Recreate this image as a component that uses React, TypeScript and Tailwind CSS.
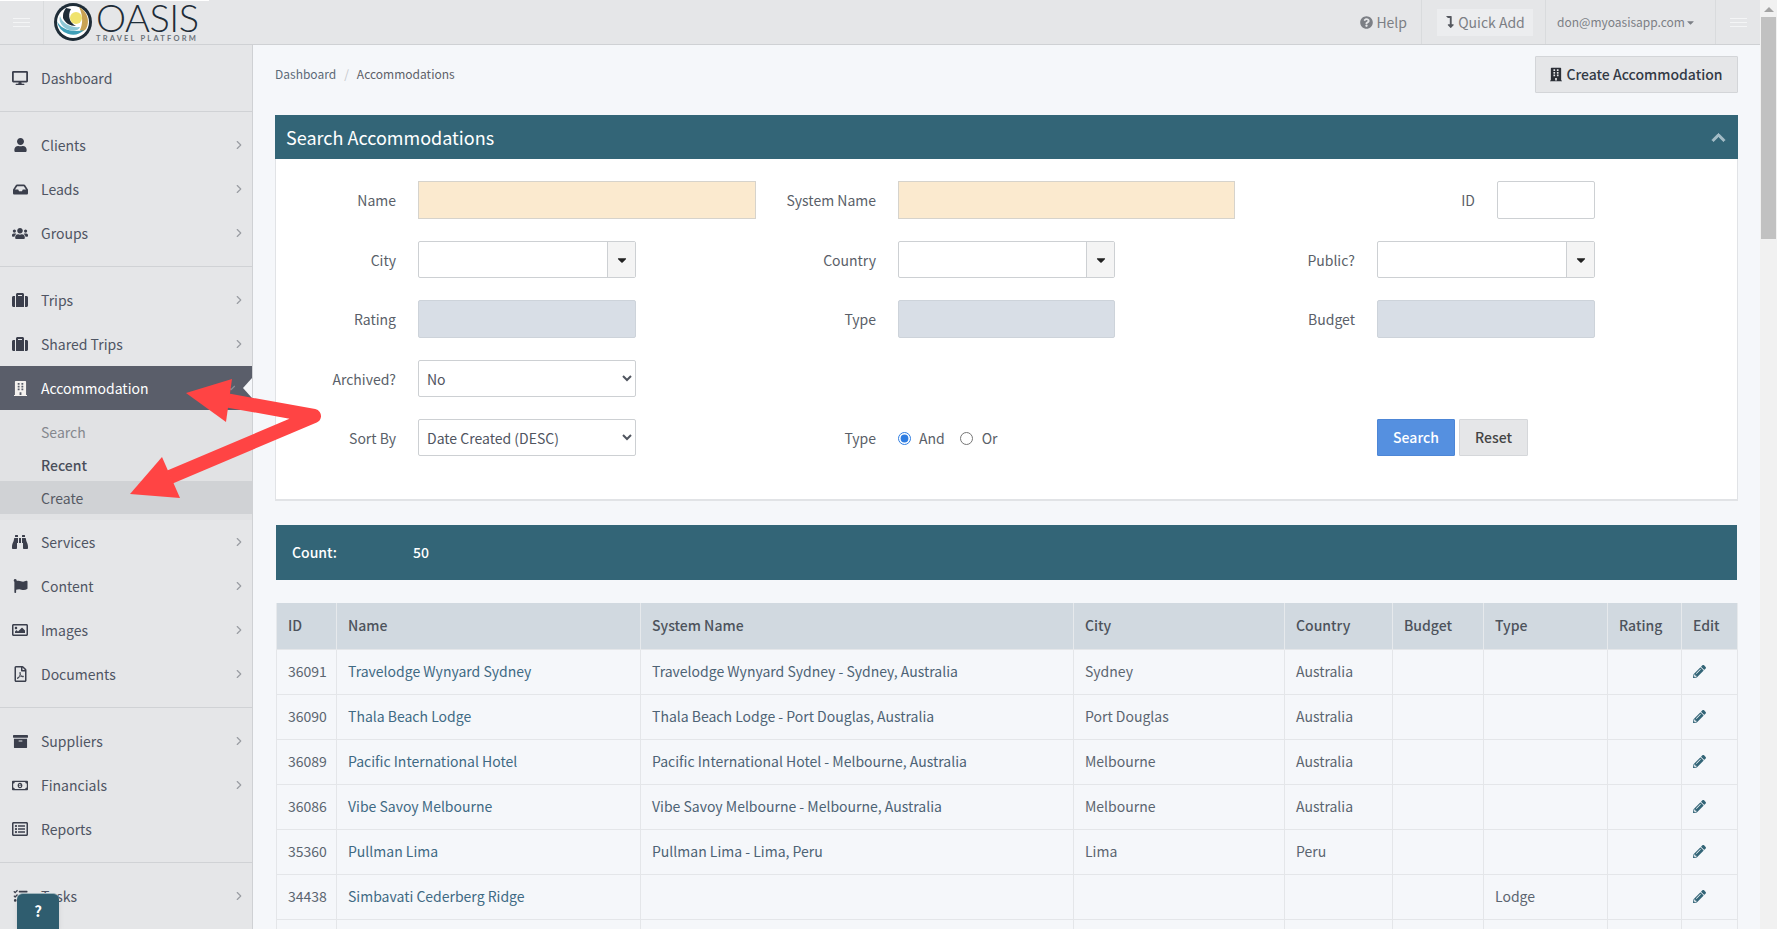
import React from "react";
import { ChevronRight, ChevronDown } from "lucide-react";
import {
  FaDesktop,
  FaUser,
  FaInbox,
  FaUsers,
  FaSuitcase,
  FaBuilding,
  FaBinoculars,
  FaFlag,
  FaRegImage,
  FaRegFilePdf,
  FaArchive,
  FaRegMoneyBillAlt,
  FaRegListAlt,
  FaTasks,
  FaQuestionCircle,
  FaLevelDownAlt,
  FaCaretDown,
  FaPencilAlt,
  FaChevronUp,
} from "react-icons/fa";

const FONT = "font-['Noto_Sans_CJK_SC','Source_Sans_Pro','Open_Sans',sans-serif]";

interface NavItem {
  label: string;
  icon: React.ReactNode;
  chevron?: boolean;
}

const iconClass = "w-[16px] h-[16px]";

const mainGroups: NavItem[][] = [
  [{ label: "Dashboard", icon: <FaDesktop className={iconClass} /> }],
  [
    { label: "Clients", icon: <FaUser className="w-[13px] h-[14px]" />, chevron: true },
    { label: "Leads", icon: <FaInbox className="w-[15px] h-[15px]" />, chevron: true },
    { label: "Groups", icon: <FaUsers className="w-[17px] h-[17px]" />, chevron: true },
  ],
];

const lowerGroups: NavItem[][] = [
  [
    { label: "Suppliers", icon: <FaArchive className="w-[15px] h-[15px]" />, chevron: true },
    { label: "Financials", icon: <FaRegMoneyBillAlt className="w-[17px] h-[17px]" />, chevron: true },
    { label: "Reports", icon: <FaRegListAlt className={iconClass} /> },
  ],
  [{ label: "Tasks", icon: <FaTasks className="w-[15px] h-[14px]" />, chevron: true }],
];

const rows = [
  ["36091", "Travelodge Wynyard Sydney", "Travelodge Wynyard Sydney - Sydney, Australia", "Sydney", "Australia", ""],
  ["36090", "Thala Beach Lodge", "Thala Beach Lodge - Port Douglas, Australia", "Port Douglas", "Australia", ""],
  ["36089", "Pacific International Hotel", "Pacific International Hotel - Melbourne, Australia", "Melbourne", "Australia", ""],
  ["36086", "Vibe Savoy Melbourne", "Vibe Savoy Melbourne - Melbourne, Australia", "Melbourne", "Australia", ""],
  ["35360", "Pullman Lima", "Pullman Lima - Lima, Peru", "Lima", "Peru", ""],
  ["34438", "Simbavati Cederberg Ridge", "", "", "", "Lodge"],
];

const NavRow: React.FC<{ item: NavItem }> = ({ item }) => (
  <div className="flex items-center h-[44px] pl-[12px] pr-[6px] text-[#4f5563]">
    <span className="w-[29px] flex justify-start items-center text-[#3b3f4c]">
      <span className="w-[16px] flex justify-center">{item.icon}</span>
    </span>
    <span className="flex-1 text-[14px] leading-5">{item.label}</span>
    {item.chevron && <ChevronRight size={14} className="text-[#9a9da3]" />}
  </div>
);

const Divider: React.FC<{ items: NavItem[]; children?: React.ReactNode }> = ({ items, children }) => (
  <div className="py-[11px] border-b border-[#d0d2d5]">
    {items.map((item) => (
      <NavRow key={item.label} item={item} />
    ))}
    {children}
  </div>
);

const Sidebar: React.FC = () => (
  <aside className="w-[253px] shrink-0 bg-[#e5e6e8] border-r border-[#cfd1d4] overflow-hidden">
    {mainGroups.map((items, i) => (
      <Divider key={i} items={items} />
    ))}
    <div className="pt-[11px] pb-[11px] border-b border-[#d0d2d5]">
      <NavRow item={{ label: "Trips", icon: <FaSuitcase className={iconClass} />, chevron: true }} />
      <NavRow item={{ label: "Shared Trips", icon: <FaSuitcase className={iconClass} />, chevron: true }} />
      <div className="relative flex items-center h-[44px] pl-[12px] pr-[6px] bg-[#5a5e6a] text-white">
        <span className="w-[29px] flex items-center">
          <span className="w-[16px] flex justify-center">
            <FaBuilding className="w-[13px] h-[15px] text-[#f4f1ee]" />
          </span>
        </span>
        <span className="flex-1 text-[14px] leading-5">Accommodation</span>
        <ChevronDown size={14} className="text-[#8a8d95] mr-[8px]" />
        <span className="absolute right-0 top-[12px] border-y-[10px] border-y-transparent border-r-[9px] border-r-[#f5f7fa]" />
      </div>
      <div className="pt-[5px] pb-[6px] bg-[#e1e2e4] text-[14px] leading-5">
        <div className="h-[33px] flex items-center pl-[41px] text-[#85888e]">Search</div>
        <div className="h-[33px] flex items-center pl-[41px] text-[#4a4e5a] font-medium">Recent</div>
        <div className="h-[33px] flex items-center pl-[41px] text-[#565a64] bg-[#d0d2d5]">Create</div>
      </div>
      <NavRow item={{ label: "Services", icon: <FaBinoculars className={iconClass} />, chevron: true }} />
      <NavRow item={{ label: "Content", icon: <FaFlag className="w-[15px] h-[14px]" />, chevron: true }} />
      <NavRow item={{ label: "Images", icon: <FaRegImage className={iconClass} />, chevron: true }} />
      <NavRow item={{ label: "Documents", icon: <FaRegFilePdf className="w-[13px] h-[16px]" />, chevron: true }} />
    </div>
    {lowerGroups.map((items, i) => (
      <Divider key={i} items={items} />
    ))}
  </aside>
);

const Hamburger: React.FC = () => (
  <div className="flex flex-col gap-[3px] w-[17px]">
    <span className="h-[1px] bg-[#f4f5f6]" />
    <span className="h-[1px] bg-[#f4f5f6]" />
    <span className="h-[1px] bg-[#f4f5f6]" />
  </div>
);

const Logo: React.FC = () => (
  <div className="flex items-start ml-[9px] h-[44px] w-[150px]">
    <svg width="40" height="40" viewBox="0 0 40 40" className="mt-[2px] shrink-0">
      <circle cx="20" cy="20" r="19" fill="#1f2d38" />
      <circle cx="20" cy="20" r="16" fill="#ffffff" />
      <path d="M26 5a16 16 0 0 1 7 22c-3 3-5 3-6 1 3-6 3-15-1-23z" fill="#c9a253" />
      <path d="M4 19c4 8 14 12 27 9a16 16 0 0 1-27-9z" fill="#3f9fb8" />
      <path d="M7 14c2 7 10 12 20 11-1 3-6 5-11 3C10 26 5 20 7 14z" fill="#8ec8d6" />
      <path d="M13 6a14 14 0 0 0-3 10c2 5 7 8 13 8-6-3-9-10-5-17z" fill="#1f2d38" />
      <circle cx="23" cy="16" r="6" fill="#f0e36e" />
    </svg>
    <div className="ml-[3px]">
      <div className="font-['Lato',sans-serif] font-light text-[38px] leading-[35px] tracking-[-0.5px] text-[#1f2d38]">OASIS</div>
      <div className="font-['Lato',sans-serif] font-bold text-[7.5px] leading-[8px] tracking-[2.2px] text-[#6b7279] whitespace-nowrap">TRAVEL PLATFORM</div>
    </div>
  </div>
);

const Header: React.FC = () => (
  <header className="relative h-[45px] shrink-0 bg-[#e5e6e8] border-b border-[#cfd1d4] flex items-center text-[#7c7f85]">
    <span className="absolute top-0 left-0 w-[209px] h-px bg-white" />
    <div className="w-[44px] h-full flex items-center justify-center border-r border-[#d9dbdd]">
      <Hamburger />
    </div>
    <Logo />
    <div className="ml-auto flex items-center h-full">
      <div className="h-full flex items-center gap-[3px] pr-[14px] border-r border-[#d9dbdd] text-[14px]">
        <FaQuestionCircle className="w-[13px] h-[13px]" />
        <span>Help</span>
      </div>
      <div className="h-full flex items-center pl-[15px] pr-[12px] border-r border-[#d9dbdd]">
        <div className="h-[27px] w-[96px] bg-[#ecedef] flex items-center justify-center gap-[3px] text-[14px]">
          <FaLevelDownAlt className="w-[10px] h-[12px] text-[#55585f]" />
          <span>Quick Add</span>
        </div>
      </div>
      <div className="h-full w-[170px] flex items-center pl-[11px] border-r border-[#d9dbdd] text-[12px]">
        <span>don@myoasisapp.com</span>
        <FaCaretDown className="w-[11px] h-[11px]" />
      </div>
      <div className="w-[44px] h-full flex items-center justify-center">
        <Hamburger />
      </div>
    </div>
  </header>
);

const Label: React.FC<{ children: React.ReactNode; width?: string }> = ({ children, width = "w-[120px]" }) => (
  <span className={`${width} shrink-0 text-right text-[14px] text-[#5a5f69] pt-[1px]`}>{children}</span>
);

const Combo: React.FC<{ width?: string }> = ({ width = "w-[218px]" }) => (
  <div className={`${width} h-full flex border border-[#cdd0d3] rounded-[2px] bg-white`}>
    <div className="flex-1" />
    <div className="w-[28px] bg-[#f4f4f4] border-l border-[#cdd0d3] flex items-center justify-center">
      <FaCaretDown className="w-[14px] h-[14px] text-[#222]" />
    </div>
  </div>
);

const Field: React.FC<{ label: string; children?: React.ReactNode; labelWidth?: string }> = ({ label, children, labelWidth }) => (
  <div className="flex items-center gap-[22px] h-full">
    <Label width={labelWidth}>{label}</Label>
    {children}
  </div>
);

const SearchForm: React.FC = () => (
  <div className="bg-white border-x border-b-2 border-[#e1e3e6] h-[342px] pt-[22px] pl-0">
    <div className="grid grid-cols-[480px_479px_480px] grid-rows-[38px_37px_38px_37px_37px] gap-y-[22px]">
      <Field label="Name">
        <div className="w-[338px] h-full bg-[#fbeacf] border border-[#d6d3cc]" />
      </Field>
      <Field label="System Name">
        <div className="w-[337px] h-full bg-[#fbeacf] border border-[#d6d3cc]" />
      </Field>
      <Field label="ID" labelWidth="w-[240px]">
        <div className="w-[98px] h-full bg-white border border-[#cdd0d3] rounded-[2px]" />
      </Field>

      <Field label="City"><Combo /></Field>
      <Field label="Country"><Combo width="w-[217px]" /></Field>
      <Field label="Public?"><Combo /></Field>

      <Field label="Rating"><div className="w-[218px] h-full bg-[#d8dee6] border border-[#cdd3da] rounded-[2px]" /></Field>
      <Field label="Type"><div className="w-[217px] h-full bg-[#d8dee6] border border-[#cdd3da] rounded-[2px]" /></Field>
      <Field label="Budget"><div className="w-[218px] h-full bg-[#d8dee6] border border-[#cdd3da] rounded-[2px]" /></Field>

      <Field label="Archived?">
        <select className="w-[218px] h-full bg-white border border-[#cdd0d3] rounded-[2px] pl-[4px] text-[14px] text-[#50555f]">
          <option>No</option>
        </select>
      </Field>
      <div />
      <div />

      <Field label="Sort By">
        <select className="w-[218px] h-full bg-white border border-[#cdd0d3] rounded-[2px] pl-[4px] text-[14px] text-[#50555f]">
          <option>Date Created (DESC)</option>
        </select>
      </Field>
      <Field label="Type">
        <div className="flex items-center text-[14px] text-[#5a5f69] pt-[1px]">
          <input type="radio" name="match" defaultChecked className="w-[13px] h-[13px] accent-[#2f7de1] mr-[8px]" />
          <span className="mr-[15px]">And</span>
          <input type="radio" name="match" className="w-[13px] h-[13px] mr-[9px]" />
          <span>Or</span>
        </div>
      </Field>
      <div className="flex items-center h-full pl-[142px] gap-[4px]">
        <button className="w-[78px] h-full bg-[#5590e0] border border-[#4d86d6] rounded-[1px] text-white text-[14px] font-medium">Search</button>
        <button className="w-[69px] h-full bg-[#e5e6e8] border border-[#d5d7da] rounded-[1px] text-[#444] text-[14px] font-medium">Reset</button>
      </div>
    </div>
  </div>
);

const ResultsTable: React.FC = () => (
  <table className="mt-[23px] mx-px w-[1461px] table-fixed border-collapse text-[14px]">
    <colgroup>
      <col className="w-[60px]" />
      <col className="w-[304px]" />
      <col className="w-[433px]" />
      <col className="w-[211px]" />
      <col className="w-[108px]" />
      <col className="w-[91px]" />
      <col className="w-[124px]" />
      <col className="w-[74px]" />
      <col className="w-[56px]" />
    </colgroup>
    <thead>
      <tr className="h-[46px] bg-[#d1d9e0] text-[#4d535c]">
        {["ID", "Name", "System Name", "City", "Country", "Budget", "Type", "Rating", "Edit"].map((h) => (
          <th key={h} className="text-left font-medium pl-[11px] border-x border-[#e6e9ec]">
            {h}
          </th>
        ))}
      </tr>
    </thead>
    <tbody>
      {rows.map((r) => (
        <tr key={r[0]} className="h-[45px] text-[#5b6570]">
          <td className="pl-[11px] border border-[#e4e6e9]">{r[0]}</td>
          <td className="pl-[11px] border border-[#e4e6e9] text-[#3f6a84]">{r[1]}</td>
          <td className="pl-[11px] border border-[#e4e6e9] text-[#4d6375]">{r[2]}</td>
          <td className="pl-[11px] border border-[#e4e6e9]">{r[3]}</td>
          <td className="pl-[11px] border border-[#e4e6e9]">{r[4]}</td>
          <td className="border border-[#e4e6e9]" />
          <td className="pl-[11px] border border-[#e4e6e9]">{r[5]}</td>
          <td className="border border-[#e4e6e9]" />
          <td className="pl-[11px] border border-[#e4e6e9]">
            <FaPencilAlt className="w-[13px] h-[13px] text-[#336577]" />
          </td>
        </tr>
      ))}
      <tr className="h-[45px]">
        {Array.from({ length: 9 }, (_, i) => (
          <td key={i} className="border border-[#e4e6e9]" />
        ))}
      </tr>
    </tbody>
  </table>
);

const Arrows: React.FC = () => (
  <svg className="absolute top-0 left-0 pointer-events-none" width="400" height="560" viewBox="0 0 400 560">
    <polyline
      points="225,400 314,416 170,477"
      fill="none"
      stroke="#ff4444"
      strokeWidth="14"
      strokeLinejoin="round"
      strokeLinecap="butt"
    />
    <polygon points="186,393 232,379 226,422" fill="#ff4444" />
    <polygon points="130,494 162,457 180,498" fill="#ff4444" />
  </svg>
);

const Scrollbar: React.FC = () => (
  <div className="w-[17px] shrink-0 bg-[#f1f1f1] flex flex-col items-center">
    <span className="mt-[7px] border-x-[5px] border-x-transparent border-b-[5px] border-b-[#a3a3a3]" />
    <div className="mt-[5px] w-[15px] h-[222px] bg-[#c1c1c1]" />
  </div>
);

export default function App() {
  return (
    <div className={`relative flex h-screen overflow-hidden bg-[#f5f7fa] ${FONT}`}>
      <div className="flex-1 min-w-0 flex flex-col">
        <Header />
        <div className="flex flex-1 min-h-0">
          <Sidebar />
          <main className="flex-1 min-w-0 px-[22px] pt-[11px] overflow-hidden">
            <div className="flex items-start justify-between h-[37px]">
              <div className="flex items-center h-[35px] text-[12px] text-[#5c6a78]">
                <span>Dashboard</span>
                <span className="mx-[8px] text-[#c5c8cc]">/</span>
                <span className="text-[#5d6169]">Accommodations</span>
              </div>
              <button className="w-[203px] h-[37px] bg-[#e5e6e8] border border-[#d3d5d8] rounded-[1px] flex items-center justify-center gap-[4px] text-[14px] font-medium text-[#333a45]">
                <FaBuilding className="w-[12px] h-[15px] text-[#2b2f36]" />
                Create Accommodation
              </button>
            </div>
            <section className="mt-[22px]">
              <div className="h-[44px] bg-[#336577] flex items-center justify-between pl-[11px] pr-[12px] text-white">
                <h1 className="text-[18px] font-normal leading-none">Search Accommodations</h1>
                <FaChevronUp className="w-[15px] h-[15px] text-[#a3bcc6] stroke-[30px]" />
              </div>
              <SearchForm />
            </section>
            <div className="mt-[24px] mx-px h-[55px] bg-[#336577] flex items-center text-[14px] font-medium text-white">
              <span className="pl-[16px] w-[137px]">Count:</span>
              <span>50</span>
            </div>
            <ResultsTable />
          </main>
        </div>
      </div>
      <Scrollbar />
      <Arrows />
      <div className="absolute left-[17px] bottom-0 w-[42px] h-[36px] bg-[#2f5d6f] border-t border-[#9fb5bd] rounded-t-[6px] shadow-md flex items-center justify-center text-white text-[15px] font-bold">
        ?
      </div>
    </div>
  );
}
